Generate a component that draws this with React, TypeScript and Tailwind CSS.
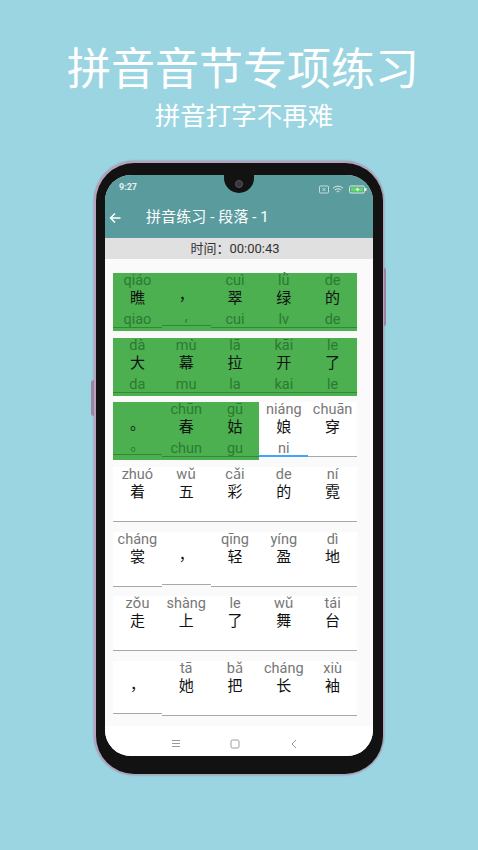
import React from "react";

const CJK = "font-['Roboto','Noto_Sans_CJK_SC',sans-serif]";

type CellState = "done" | "active" | "idle";

interface CellData {
  py: string;
  zi: string;
  input?: string;
  state?: CellState;
  active?: boolean;
  short?: boolean;
}

const rows: CellData[][] = [
  [
    { py: "qiáo", zi: "瞧", input: "qiao", state: "done" },
    { py: "", zi: "，", input: ",", state: "done", short: true },
    { py: "cuì", zi: "翠", input: "cui", state: "done" },
    { py: "lǜ", zi: "绿", input: "lv", state: "done" },
    { py: "de", zi: "的", input: "de", state: "done" },
  ],
  [
    { py: "dà", zi: "大", input: "da", state: "done" },
    { py: "mù", zi: "幕", input: "mu", state: "done" },
    { py: "lā", zi: "拉", input: "la", state: "done" },
    { py: "kāi", zi: "开", input: "kai", state: "done" },
    { py: "le", zi: "了", input: "le", state: "done" },
  ],
  [
    { py: "", zi: "。", input: "。", state: "done", short: true },
    { py: "chūn", zi: "春", input: "chun", state: "done" },
    { py: "gū", zi: "姑", input: "gu", state: "done" },
    { py: "niáng", zi: "娘", input: "ni", active: true },
    { py: "chuān", zi: "穿" },
  ],
  [
    { py: "zhuó", zi: "着" },
    { py: "wǔ", zi: "五" },
    { py: "cǎi", zi: "彩" },
    { py: "de", zi: "的" },
    { py: "ní", zi: "霓" },
  ],
  [
    { py: "cháng", zi: "裳" },
    { py: "", zi: "，", short: true },
    { py: "qīng", zi: "轻" },
    { py: "yíng", zi: "盈" },
    { py: "dì", zi: "地" },
  ],
  [
    { py: "zǒu", zi: "走" },
    { py: "shàng", zi: "上" },
    { py: "le", zi: "了" },
    { py: "wǔ", zi: "舞" },
    { py: "tái", zi: "台" },
  ],
  [
    { py: "", zi: "，", short: true },
    { py: "tā", zi: "她" },
    { py: "bǎ", zi: "把" },
    { py: "cháng", zi: "长" },
    { py: "xiù", zi: "袖" },
  ],
];

function Cell({ cell }: { cell: CellData }) {
  const done = cell.state === "done";
  return (
    <div className={`flex-1 h-[58px] ${done ? "bg-[#4caf50]" : ""}`}>
      <div
        className={`flex flex-col items-center ${cell.active ? "border-b-2" : "border-b-[1.5px]"} ${cell.short ? "h-[53px]" : "h-[55px]"} ${
          done ? "border-[#2f8a36]" : cell.active ? "border-[#42a5f5]" : "border-[#a8a8a8]"
        } ${done ? "" : "bg-white"}`}
      >
        <div className={`h-[15px] leading-[15px] text-[14.5px] ${done ? "text-[#2b7a31]" : "text-[#777]"}`}>{cell.py}</div>
        <div className="h-[19px] mt-[1px] leading-[19px] text-[15px] text-[#111]">{cell.zi}</div>
        <div className={`h-[16px] mt-[4px] leading-[16px] text-[14.5px] ${done ? "text-[#2b7a31]" : "text-[#777]"}`}>
          {cell.input}
        </div>
      </div>
    </div>
  );
}

function StatusIcons() {
  return (
    <div className="flex items-center gap-[3px]">
      <svg width="10" height="9" viewBox="0 0 10 9" fill="none" stroke="#cfe3e3" strokeWidth="0.9">
        <rect x="0.5" y="1" width="9" height="7" rx="1" />
        <path d="M3.5 3l3 3M6.5 3l-3 3" />
      </svg>
      <svg width="12" height="9" viewBox="0 0 12 9" fill="none" stroke="#e3eeee" strokeWidth="1">
        <path d="M1 3.2C3.8.6 8.2.6 11 3.2M2.8 5c1.8-1.600 4.600-1.600 6.400 0M4.600 6.800c.8-.7 2-.7 2.800 0" />
      </svg>
      <svg width="18" height="9" viewBox="0 0 18 9" fill="none" className="ml-[2px]">
        <rect x="0.5" y="1" width="15" height="7" rx="1.500" stroke="#d8eede" strokeWidth="1" />
        <rect x="2" y="2.500" width="12" height="4" fill="#5fdc5f" />
        <rect x="16" y="3" width="1.500" height="3" fill="#d8eede" />
        <path d="M9 2L6.500 5h2L8 7l2.500-3h-2z" fill="#fff" />
      </svg>
    </div>
  );
}

function Phone() {
  return (
    <div className="relative w-[290px] h-[614px] rounded-[40px] bg-[#b9a2bd] p-[1.5px] shadow-[0_0_2px_#8c7a8e]">
      {/* 侧边按键 */}
      <div className="absolute right-[-2px] top-[107px] w-[2px] h-[58px] rounded-r bg-[#9c849e]" />
      <div className="absolute left-[-3px] top-[219px] w-[3px] h-[36px] rounded-l bg-[#9c849e]" />
      <div className="h-full rounded-[38px] bg-[#121212] pt-[12.500px] px-[9.500px] pb-[17.500px]">
        <div className={`relative h-full rounded-[26px] overflow-hidden flex flex-col bg-[#fafafa] ${CJK}`}>
          {/* 刘海 */}
          <div className="absolute left-1/2 -translate-x-1/2 top-0 w-[30px] h-[18px] rounded-b-[15px] bg-[#121212] flex items-center justify-center">
            <div className="w-[8px] h-[8px] rounded-full bg-[#3b3340] border border-[#555]" />
          </div>
          <div className="h-[63px] shrink-0 bg-[#5a9c9e] flex flex-col shadow-[0_1px_3px_rgba(0,0,0,0.3)]">
            <div className="h-[19px] flex items-end justify-between pl-[14px] pr-[6px]">
              <span className="text-[9px] leading-[13px] font-bold text-[#e6f0f0] font-['Roboto',sans-serif]">9:27</span>
              <StatusIcons />
            </div>
            <div className="flex items-center h-[44px] pt-[3px] pl-[4px] text-white">
              <svg width="12" height="12" viewBox="0 0 12 12" fill="none" stroke="#fff" strokeWidth="1.500">
                <path d="M11.500 6H1.500M6 1.500L1.500 6 6 10.500" />
              </svg>
              <span className="ml-[25px] text-[15px] tracking-[0.1px]">拼音练习 - 段落 - 1</span>
            </div>
          </div>
          <div className="h-[21px] shrink-0 bg-[#e0e0e0] text-center text-[13px] leading-[21px] text-[#333] pr-[8px]">
            时间：00:00:43
          </div>
          <div className="flex-1 min-h-0 overflow-hidden pl-[8px] pr-[16px] pt-[14px]">
            {rows.map((row, i) => (
              <div key={i} className="flex h-[64.700px]">
                {row.map((cell, j) => (
                  <Cell key={j} cell={cell} />
                ))}
              </div>
            ))}
          </div>
          <div className="h-[30px] shrink-0 bg-white flex items-center justify-center gap-[49px] pr-[8px] pt-[5px]">
            <svg width="10" height="9" viewBox="0 0 10 9" stroke="#999" strokeWidth="1">
              <path d="M1 1.500h8M1 4.500h8M1 7.500h8" />
            </svg>
            <svg width="10" height="10" viewBox="0 0 10 10" fill="none" stroke="#999" strokeWidth="1">
              <rect x="1" y="1" width="8" height="8" rx="1.500" />
            </svg>
            <svg width="10" height="10" viewBox="0 0 10 10" fill="none" stroke="#999" strokeWidth="1">
              <path d="M7 1L3 5l4 4" />
            </svg>
          </div>
        </div>
      </div>
    </div>
  );
}

export default function App() {
  return (
    <div className={`w-[478px] h-[850px] overflow-hidden bg-[#9bd5e2] flex flex-col items-center ${CJK}`}>
      <div className="mt-[37px] pl-[8px] h-[58px] leading-[58px] text-[44px] text-white font-['Noto_Sans_CJK_SC',sans-serif]">拼音音节专项练习</div>
      <div className="mt-[3px] pl-[10px] h-[32px] leading-[32px] text-[25.500px] text-white font-['Noto_Sans_CJK_SC',sans-serif]">拼音打字不再难</div>
      <div className="mt-[31px]">
        <Phone />
      </div>
    </div>
  );
}
